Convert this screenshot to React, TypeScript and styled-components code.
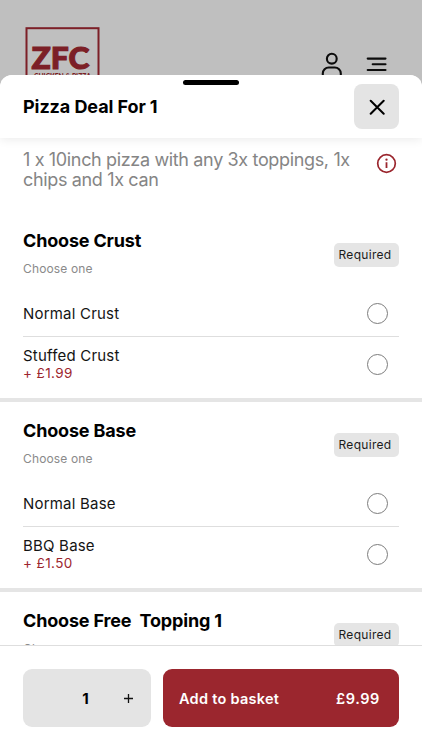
import React from "react";
import styled, { createGlobalStyle } from "styled-components";

const GlobalStyle = createGlobalStyle`
  * { box-sizing: border-box; }
  body { margin: 0; font-family: Inter, "Liberation Sans", sans-serif; font-feature-settings: "calt" 0; color: #0b0b0b; background: #bfbfbf; }
  button { font: inherit; border: 0; padding: 0; color: inherit; }
  h1, h2, p { margin: 0; }
`;

const Screen = styled.div`
  height: 750px;
  display: flex;
  flex-direction: column;
  overflow: hidden;
  background: #bfbfbf;
`;

const TopBar = styled.header`
  height: 75px;
  flex: none;
  display: flex;
  align-items: flex-start;
  justify-content: space-between;
  padding: 27px 33px 0 25px;
  overflow: hidden;
`;

const TopIcons = styled.div`
  display: flex;
  gap: 21px;
  padding-top: 25px;
`;

const Sheet = styled.main`
  flex: 1;
  min-height: 0;
  display: flex;
  flex-direction: column;
  background: #fff;
  border-radius: 12px 12px 0 0;
  overflow: hidden;
`;

const SheetHeader = styled.div`
  position: relative;
  z-index: 1;
  flex: none;
  height: 63px;
  display: flex;
  align-items: center;
  justify-content: space-between;
  padding: 0 23px;
  background: #fff;
  box-shadow: 0 1px 10px rgba(0, 0, 0, 0.09);
`;

const Grabber = styled.span`
  position: absolute;
  top: 5px;
  left: 183px;
  width: 56px;
  height: 5px;
  border-radius: 3px;
  background: #000;
`;

const Title = styled.h1`
  font-size: 18px;
  line-height: 22px;
  font-weight: 700;
  letter-spacing: -0.08px;
  color: #000;
`;

const CloseButton = styled.button`
  width: 45px;
  height: 45px;
  border-radius: 8px;
  background: #e4e4e4;
  display: grid;
  place-items: center;
`;

const Content = styled.div`
  flex: 1;
  min-height: 0;
  overflow: hidden;
`;

const Intro = styled.div`
  height: 74px;
  display: flex;
  justify-content: space-between;
  align-items: flex-start;
  padding: 12px 25px 0 23px;
`;

const Description = styled.p`
  width: 335px;
  font-size: 18px;
  line-height: 20px;
  letter-spacing: -0.35px;
  white-space: nowrap;
  color: #858585;
`;

const InfoIcon = styled.svg`
  margin-top: 3px;
  display: block;
`;

const Section = styled.section`
  height: 190px;
  padding: 18px 23px 0;
  border-bottom: 4px solid #e5e5e5;
`;

const SectionHead = styled.div`
  height: 61px;
  display: flex;
  justify-content: space-between;
  align-items: flex-start;
`;

const Heading = styled.h2`
  font-size: 18px;
  line-height: 22px;
  font-weight: 700;
  letter-spacing: -0.17px;
  white-space: pre;
  color: #000;
`;

const Hint = styled.p`
  margin-top: 9px;
  font-size: 12px;
  line-height: 16px;
  letter-spacing: 0.14px;
  color: #8a8a8a;
`;

const Badge = styled.span`
  width: 65px;
  height: 24px;
  margin-top: 13px;
  padding-left: 4.5px;
  border-radius: 5px;
  background: #e5e5e5;
  font-size: 12px;
  line-height: 24px;
  letter-spacing: 0.3px;
  color: #1c1c1c;
`;

const Option = styled.label<{ $divided?: boolean }>`
  height: ${(p) => (p.$divided ? 46 : 54)}px;
  display: flex;
  align-items: center;
  justify-content: space-between;
  padding-right: 11px;
  border-bottom: ${(p) => (p.$divided ? "1px solid #dedede" : "0")};
`;

const OptionText = styled.span<{ $priced?: boolean }>`
  display: flex;
  flex-direction: column;
  padding-bottom: ${(p) => (p.$priced ? 2 : 0)}px;
`;

const OptionName = styled.span`
  font-size: 15px;
  line-height: 19px;
  letter-spacing: 0.2px;
  color: #141414;
`;

const Extra = styled.span`
  font-size: 13.5px;
  line-height: 16px;
  letter-spacing: 0.4px;
  color: #9c262e;
`;

const Radio = styled.span`
  width: 21px;
  height: 21px;
  border: 1px solid #7c7c7c;
  border-radius: 50%;
`;

const Footer = styled.footer`
  flex: none;
  height: 105px;
  display: flex;
  gap: 12px;
  padding: 23px 23px 0;
  border-top: 1px solid #dedede;
  background: #fff;
`;

const Quantity = styled.div`
  width: 128px;
  height: 58px;
  border-radius: 9px;
  background: #e4e4e4;
  display: grid;
  grid-template-columns: 40px 45px 43px;
  align-items: center;
  font-size: 15px;
`;

const Count = styled.span`
  grid-column: 2;
  text-align: center;
  font-weight: 700;
  color: #000;
`;

const Plus = styled.button`
  background: none;
  height: 58px;
  padding-right: 3px;
  display: grid;
  place-items: center;
`;

const AddButton = styled.button`
  flex: 1;
  height: 58px;
  border-radius: 9px;
  background: #9b262e;
  color: #fff;
  display: flex;
  align-items: center;
  justify-content: space-between;
  padding: 0 19px 0 16px;
  font-size: 14.5px;
  font-weight: 600;
  letter-spacing: 0.27px;
`;

const Price = styled.span`
  letter-spacing: 0.6px;
`;

const groups = [
  { title: "Choose Crust", options: [{ name: "Normal Crust" }, { name: "Stuffed Crust", extra: "+ £1.99" }] },
  { title: "Choose Base", options: [{ name: "Normal Base" }, { name: "BBQ Base", extra: "+ £1.50" }] },
  { title: "Choose Free  Topping 1", options: [] },
] as { title: string; options: { name: string; extra?: string }[] }[];

function Logo() {
  return (
    <svg width="75" height="60" viewBox="0 0 75 60">
      <rect x="1.5" y="1.2" width="72" height="72" fill="none" stroke="#7c1f27" strokeWidth="2" />
      <text x="6.5" y="41.500" fontFamily="Lato" fontWeight="900" fontSize="31" textLength="58" lengthAdjust="spacingAndGlyphs" fill="#7c1f27" stroke="#7c1f27" strokeWidth="1.100">ZFC</text>
      <text x="9" y="52.200" fontFamily="Lato" fontWeight="900" fontSize="8" textLength="57" lengthAdjust="spacingAndGlyphs" fill="#7c1f27">CHICKEN &amp; PIZZA</text>
    </svg>
  );
}

export default function App() {
  return (
    <>
      <GlobalStyle />
      <Screen>
        <TopBar>
          <Logo />
          <TopIcons>
            <svg width="24" height="30" viewBox="0 0 24 30" fill="none" stroke="#0c0c0c" strokeWidth="2.100">
              <circle cx="11.800" cy="6.700" r="4.900" />
              <path d="M2.800 26v-4.500a6 6 0 0 1 6-6h6a6 6 0 0 1 6 6V26" />
            </svg>
            <svg width="24" height="24" viewBox="0 0 24 24" fill="none" stroke="#0c0c0c" strokeWidth="2.100" strokeLinecap="round">
              <path d="M2.700 6.600h17.800M7.700 12.300h12.800M2.700 18h17.800" />
            </svg>
          </TopIcons>
        </TopBar>
        <Sheet>
          <SheetHeader>
            <Grabber />
            <Title>Pizza Deal For 1</Title>
            <CloseButton aria-label="Close">
              <svg width="17" height="17" viewBox="0 0 17 17" fill="none" stroke="#000" strokeWidth="2" strokeLinecap="round">
                <path d="M2.700 2.700l13 13M15.700 2.700l-13 13" />
              </svg>
            </CloseButton>
          </SheetHeader>
          <Content>
            <Intro>
              <Description>
                1 x 10inch pizza with any 3x toppings, 1x<br />chips and 1x can
              </Description>
              <InfoIcon width="21" height="21" viewBox="0 0 21 21" fill="none" stroke="#9b262e">
                <circle cx="10.500" cy="10.500" r="8.800" strokeWidth="1.700" />
                <path d="M10.500 9.200v5.800" strokeWidth="1.800" />
                <circle cx="10.500" cy="6.700" r="1.150" fill="#9b262e" stroke="none" />
              </InfoIcon>
            </Intro>
            {groups.map((group) => (
              <Section key={group.title}>
                <SectionHead>
                  <div>
                    <Heading>{group.title}</Heading>
                    <Hint>Choose one</Hint>
                  </div>
                  <Badge>Required</Badge>
                </SectionHead>
                {group.options.map((option, i) => (
                  <Option key={option.name} $divided={i === 0}>
                    <OptionText $priced={!!option.extra}>
                      <OptionName>{option.name}</OptionName>
                      {option.extra && <Extra>{option.extra}</Extra>}
                    </OptionText>
                    <Radio />
                  </Option>
                ))}
              </Section>
            ))}
          </Content>
          <Footer>
            <Quantity>
              <Count>1</Count>
              <Plus aria-label="Increase quantity">
                <svg width="9" height="9" viewBox="0 0 9 9" stroke="#111" strokeWidth="1.300">
                  <path d="M0 4.500h9M4.500 0v9" />
                </svg>
              </Plus>
            </Quantity>
            <AddButton>
              <span>Add to basket</span>
              <Price>£9.99</Price>
            </AddButton>
          </Footer>
        </Sheet>
      </Screen>
    </>
  );
}
